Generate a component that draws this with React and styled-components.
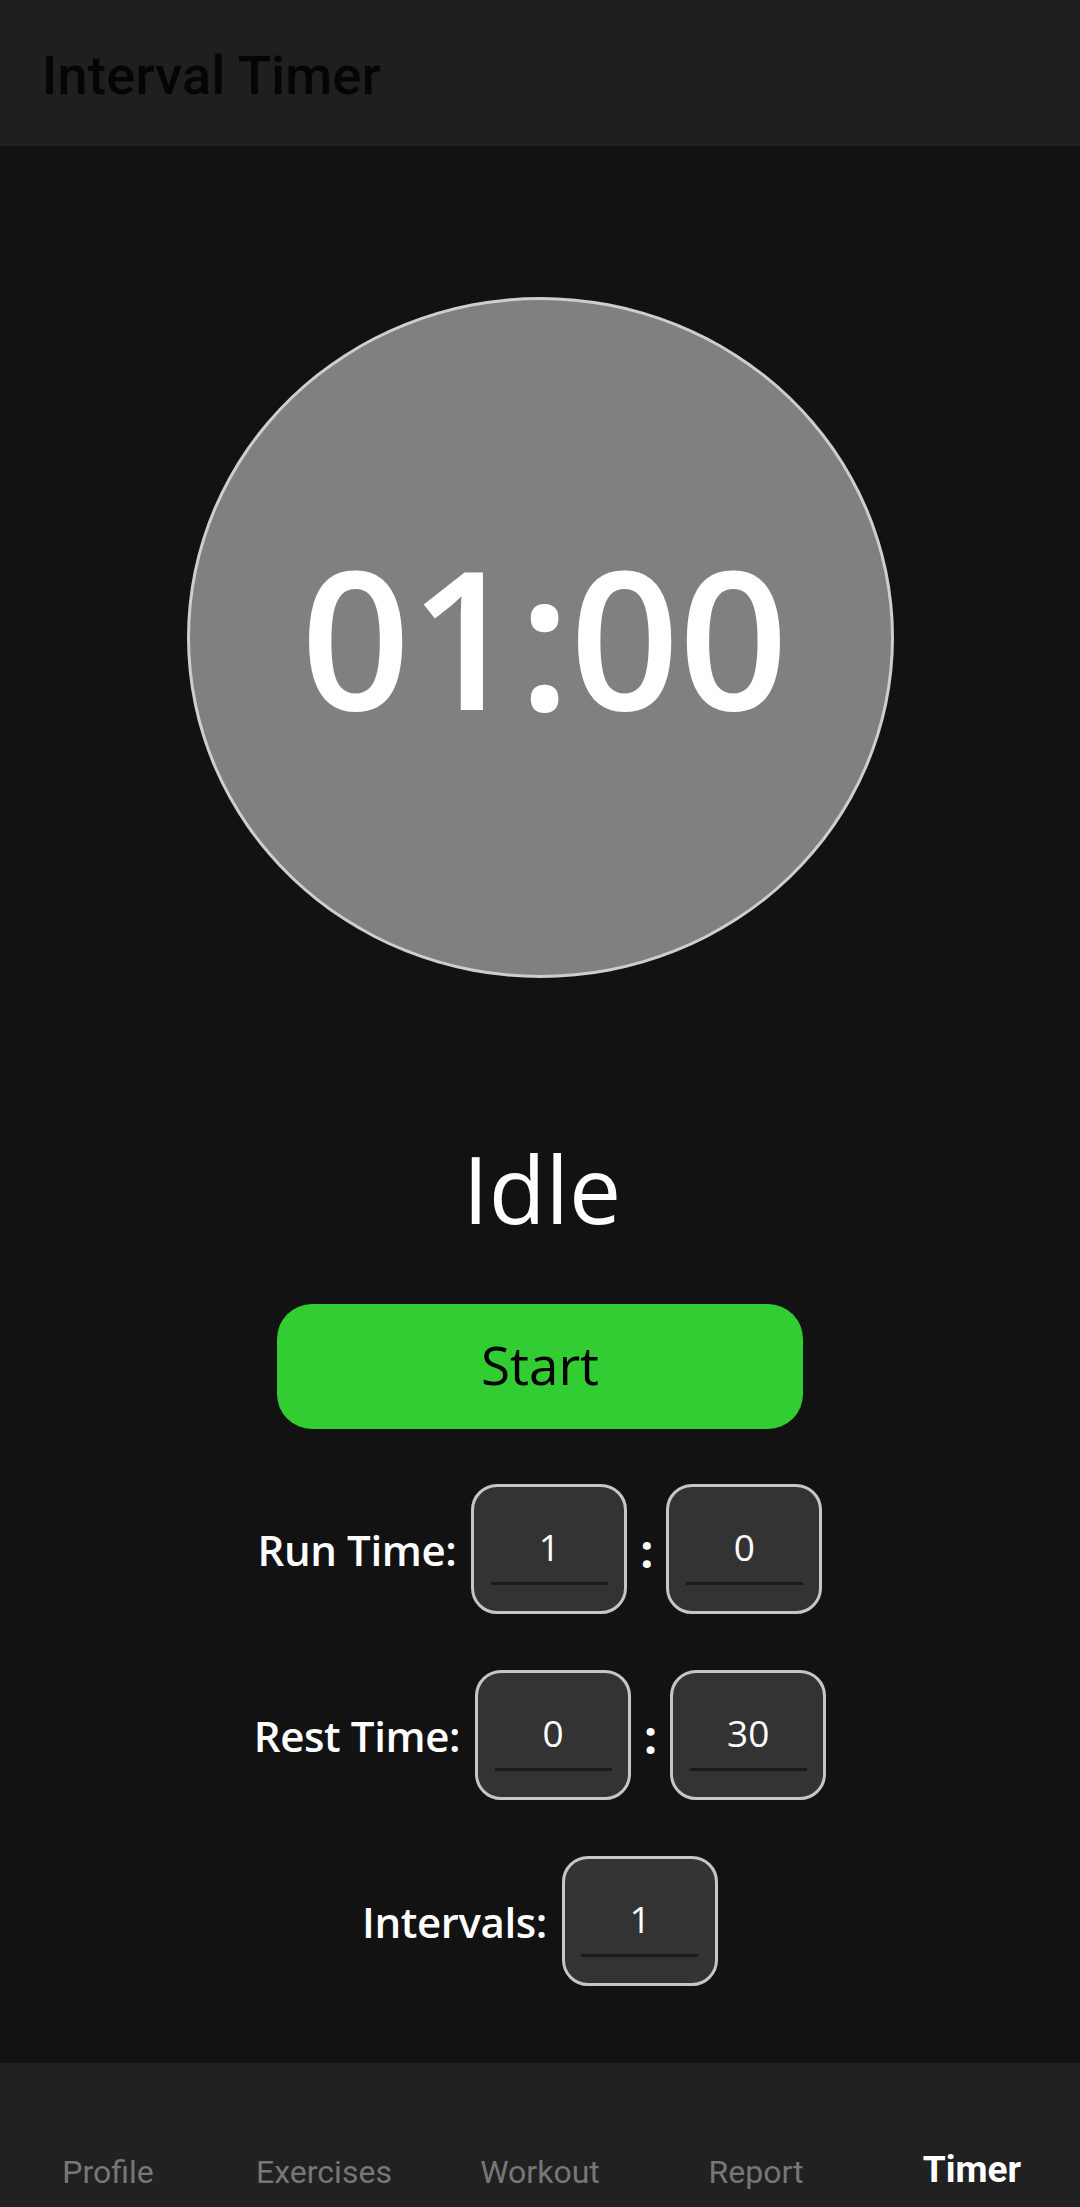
import React from "react";
import styled, { createGlobalStyle } from "styled-components";

const Global = createGlobalStyle`
  * { box-sizing: border-box; }
  html, body { margin: 0; padding: 0; background: #121212; }
  body { font-family: "Open Sans", "Noto Sans", sans-serif; }
`;

const Screen = styled.div`
  width: 1080px;
  height: 2207px;
  display: flex;
  flex-direction: column;
  background: #121212;
`;

const Header = styled.header`
  height: 146px;
  flex: none;
  background: #1f1f1f;
  display: flex;
  align-items: center;
  padding: 5px 42px 0;
`;

const Title = styled.h1`
  margin: 0;
  font-family: Roboto, "Noto Sans", sans-serif;
  font-weight: 500;
  font-size: 54px;
  color: #050505;
  letter-spacing: 0.3px;
`;

const Main = styled.main`
  flex: 1;
  display: flex;
  flex-direction: column;
  align-items: center;
`;

const Dial = styled.div`
  margin-top: 151px;
  width: 707px;
  height: 681px;
  border-radius: 50%;
  background: #808080;
  border: 3px solid #cecece;
  display: flex;
  align-items: center;
  justify-content: center;
`;

const Clock = styled.span`
  font-family: "Open Sans", sans-serif;
  font-weight: 600;
  font-size: 192px;
  line-height: 1.362;
  color: #ffffff;
  margin: -4px 0 0 8px;
  letter-spacing: -1px;
`;

const Status = styled.div`
  margin-top: 146px;
  font-size: 93px;
  line-height: 128px;
  color: #ffffff;
  font-weight: 500;
  padding-left: 4px;
`;

const StartButton = styled.button`
  margin-top: 52px;
  width: 526px;
  height: 125px;
  border: none;
  border-radius: 35px;
  background: #32cd32;
  color: #000000;
  font-family: "Open Sans", sans-serif;
  font-size: 53px;
  font-weight: 400;
  display: flex;
  align-items: center;
  justify-content: center;
  padding: 0 0 4px;
`;

const Settings = styled.div`
  margin-top: 55px;
  display: flex;
  flex-direction: column;
  align-items: center;
  gap: 56px;
`;

const Row = styled.div`
  display: flex;
  align-items: center;
  gap: 15px;
  height: 130px;
`;

const Label = styled.span`
  font-size: 42px;
  font-weight: 600;
  color: #ffffff;
  letter-spacing: -0.4px;
`;

const Sep = styled.span`
  font-size: 46px;
  font-weight: 700;
  color: #ffffff;
  margin: 2px -2px 0;
`;

const Field = styled.div`
  width: 156px;
  height: 130px;
  border-radius: 26px;
  border: 3px solid #c6c6c6;
  background: #333333;
  display: flex;
  align-items: center;
  justify-content: center;
`;

const NumInput = styled.input`
  width: 117px;
  height: 72px;
  padding: 0 0 2px;
  margin: 0;
  background: transparent;
  border: none;
  border-bottom: 3px solid #1b1b1b;
  outline: none;
  color: #ffffff;
  text-align: center;
  font-family: "Open Sans", sans-serif;
  font-size: 37px;
  font-weight: 400;
`;

const TabBar = styled.nav`
  height: 144px;
  flex: none;
  background: #212121;
  display: flex;
  align-items: flex-end;
  padding-bottom: 16px;
`;

const Tab = styled.span`
  flex: 1;
  text-align: center;
  font-family: Roboto, "Noto Sans", sans-serif;
  font-size: ${(p) => (p.$active ? "37px" : "32px")};
  font-weight: ${(p) => (p.$active ? 700 : 400)};
  color: ${(p) => (p.$active ? "#ffffff" : "#777777")};
`;

const Num = ({ value }) => <NumInput readOnly value={value} />;

export default function App() {
  const tabs = ["Profile", "Exercises", "Workout", "Report", "Timer"];
  return (
    <Screen>
      <Global />
      <Header>
        <Title>Interval Timer</Title>
      </Header>
      <Main>
        <Dial>
          <Clock>01:00</Clock>
        </Dial>
        <Status>Idle</Status>
        <StartButton>Start</StartButton>
        <Settings>
          <Row>
            <Label>Run Time:</Label>
            <Field><Num value="1" /></Field>
            <Sep>:</Sep>
            <Field><Num value="0" /></Field>
          </Row>
          <Row>
            <Label>Rest Time:</Label>
            <Field><Num value="0" /></Field>
            <Sep>:</Sep>
            <Field><Num value="30" /></Field>
          </Row>
          <Row>
            <Label>Intervals:</Label>
            <Field><Num value="1" /></Field>
          </Row>
        </Settings>
      </Main>
      <TabBar>
        {tabs.map((t) => (
          <Tab key={t} $active={t === "Timer"}>{t}</Tab>
        ))}
      </TabBar>
    </Screen>
  );
}
